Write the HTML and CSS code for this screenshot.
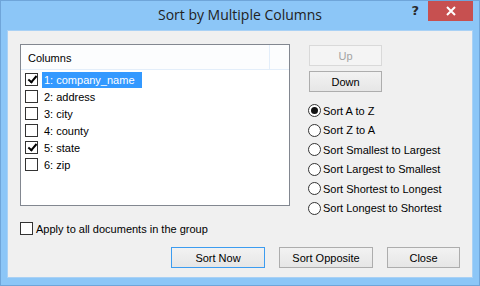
FILE: index.html
```html
<!DOCTYPE html>
<html lang="en">
<head>
  <meta charset="UTF-8" />
  <title>Sort by Multiple Columns</title>
  <link rel="stylesheet" href="styles.css">
</head>
<body>
  <div class="window">
    <div class="titlebar">
      <div class="title">Sort by Multiple Columns</div>
      <div class="help">?</div>
      <div class="close">
        <svg width="10" height="10" viewBox="0 0 10 10"><path d="M1 1 L9 9 M9 1 L1 9" stroke="#fff" stroke-width="2"/></svg>
      </div>
    </div>

    <div class="content">
      <div class="top">
        <div class="listbox">
          <div class="list-header">
            <div class="col-name">Columns</div>
            <div class="col-rest"></div>
          </div>
          <div class="row">
            <span class="check checked"></span>
            <span class="label selected">1: company_name</span>
          </div>
          <div class="row">
            <span class="check"></span>
            <span class="label">2: address</span>
          </div>
          <div class="row">
            <span class="check"></span>
            <span class="label">3: city</span>
          </div>
          <div class="row">
            <span class="check"></span>
            <span class="label">4: county</span>
          </div>
          <div class="row">
            <span class="check checked"></span>
            <span class="label">5: state</span>
          </div>
          <div class="row">
            <span class="check"></span>
            <span class="label">6: zip</span>
          </div>
        </div>

        <div class="side">
          <button class="btn small disabled">Up</button>
          <button class="btn small">Down</button>
          <div class="radios">
            <div class="radio-row"><span class="radio on"></span>Sort A to Z</div>
            <div class="radio-row"><span class="radio"></span>Sort Z to A</div>
            <div class="radio-row"><span class="radio"></span>Sort Smallest to Largest</div>
            <div class="radio-row"><span class="radio"></span>Sort Largest to Smallest</div>
            <div class="radio-row"><span class="radio"></span>Sort Shortest to Longest</div>
            <div class="radio-row"><span class="radio"></span>Sort Longest to Shortest</div>
          </div>
        </div>
      </div>

      <div class="apply">
        <span class="check"></span>
        <span>Apply to all documents in the group</span>
      </div>

      <div class="actions">
        <button class="btn wide default">Sort Now</button>
        <button class="btn wide">Sort Opposite</button>
        <button class="btn small">Close</button>
      </div>
    </div>
  </div>
</body>
</html>
```

FILE: styles.css
```css
body {
  margin: 0;
  font-family: 'Liberation Sans', Arial, sans-serif;
  font-size: 11px;
  color: #000;
}
.window {
  width: 480px;
  height: 286px;
  box-sizing: border-box;
  background: #8cc6f7;
  border: 1px solid #6fa5d9;
  display: flex;
  flex-direction: column;
}

/* Title bar */
.titlebar {
  height: 29px;
  display: flex;
  align-items: flex-start;
  position: relative;
}
.title {
  position: absolute;
  left: 0;
  right: 0;
  top: 4px;
  text-align: center;
  font-family: 'Open Sans', sans-serif;
  font-size: 14px;
  color: #222;
}
.help {
  margin-left: auto;
  margin-top: 2px;
  margin-right: 9px;
  font-family: 'DejaVu Sans', sans-serif;
  font-weight: bold;
  font-size: 13px;
  color: #2a2a2a;
}
.close {
  width: 45px;
  height: 20px;
  margin-right: 6px;
  background: #c75050;
  display: flex;
  align-items: center;
  justify-content: center;
}

/* Content */
.content {
  flex: 1;
  margin: 0 6px 7px 6px;
  background: #f0f0f0;
  border: 1px solid #a9d1f5;
  padding: 13px 12px 0 12px;
}
.top {
  display: flex;
  gap: 19px;
  height: 162px;
}
.listbox {
  width: 270px;
  height: 162px;
  box-sizing: border-box;
  border: 1px solid #828790;
  background: #fff;
}
.list-header {
  height: 24px;
  display: flex;
  background: #fcfdfe;
  border-bottom: 1px solid #e3eefa;
}
.col-name {
  width: 249px;
  padding: 7px 0 0 7px;
  box-sizing: border-box;
  border-right: 1px solid #e3eefa;
}
.row {
  height: 17px;
  display: flex;
  align-items: center;
  padding-left: 4px;
}
.list-header + .row {
  margin-top: 1px;
}
.label {
  margin-left: 4px;
  padding: 0 7px 0 2px;
  height: 16px;
  line-height: 16px;
}
.label.selected {
  background: #3399ff;
  color: #fff;
}
.check {
  width: 13px;
  height: 13px;
  box-sizing: border-box;
  border: 1px solid #333;
  background: #fff;
  position: relative;
  flex: none;
}
.check.checked::after {
  content: "";
  position: absolute;
  left: 4px;
  top: 0px;
  width: 3px;
  height: 7px;
  border: solid #000;
  border-width: 0 2px 2px 0;
  transform: rotate(40deg);
}

/* Side panel */
.side {
  padding-top: 1px;
  display: flex;
  flex-direction: column;
  align-items: flex-start;
}
.btn {
  height: 21px;
  font-family: 'Liberation Sans', Arial, sans-serif;
  font-size: 11px;
  color: #000;
  border: 1px solid #adadad;
  background: linear-gradient(#f2f2f2, #e6e6e6);
  padding: 0;
  flex: none;
}
.btn.small {
  width: 73px;
}
.btn.wide {
  width: 94px;
}
.btn.default {
  border-color: #3c9cf0;
}
.btn.disabled {
  color: #a3a3a3;
  border-color: #d9d9d9;
  background: #f4f4f4;
}
.side .btn + .btn {
  margin-top: 5px;
}
.radios {
  margin-top: 9px;
  display: flex;
  flex-direction: column;
}
.radio-row {
  height: 19.5px;
  display: flex;
  align-items: center;
  margin-left: -1px;
}
.radio {
  width: 13px;
  height: 13px;
  box-sizing: border-box;
  border: 1px solid #333;
  border-radius: 50%;
  background: #fff;
  margin-right: 2px;
  display: flex;
  align-items: center;
  justify-content: center;
}
.radio.on::after {
  content: "";
  width: 7px;
  height: 7px;
  border-radius: 50%;
  background: #111;
}

/* Bottom */
.apply {
  margin-top: 16px;
  height: 13px;
  display: flex;
  align-items: center;
  gap: 3px;
}
.actions {
  margin-top: 12px;
  display: flex;
  justify-content: flex-end;
  gap: 14px;
}
```
